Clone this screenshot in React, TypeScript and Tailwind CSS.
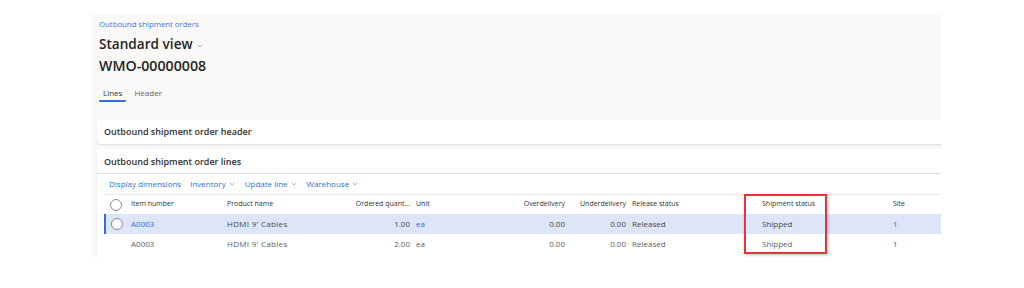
import { ChevronDown } from "lucide-react";

const font = { fontFamily: '"Open Sans", "Noto Sans", sans-serif' };

type Row = {
  item: string;
  product: string;
  qty: string;
  unit: string;
  over: string;
  under: string;
  release: string;
  shipment: string;
  site: string;
  selected?: boolean;
};

const rows: Row[] = [
  { item: "A0003", product: "HDMI 9' Cables", qty: "1.00", unit: "ea", over: "0.00", under: "0.00", release: "Released", shipment: "Shipped", site: "1", selected: true },
  { item: "A0003", product: "HDMI 9' Cables", qty: "2.00", unit: "ea", over: "0.00", under: "0.00", release: "Released", shipment: "Shipped", site: "1" },
];

function Radio() {
  return <span className="block w-[12px] h-[12px] rounded-full border border-[#8a8886] bg-white" />;
}

function ToolbarMenu({ label }: { label: string }) {
  return (
    <span className="flex items-center gap-[2px]">
      {label}
      <ChevronDown className="w-[8px] h-[8px]" strokeWidth={1.5} />
    </span>
  );
}

export default function App() {
  return (
    <div className="w-[1024px] h-[288px] bg-white pt-[14px] pl-[92px]" style={font}>
      <div className="w-[849px] h-[243px] bg-[#faf9f8] overflow-hidden">
        {/* page header */}
        <div className="pl-[7px] pt-[4px]">
          <div className="text-[7.8px] leading-[12px] text-[#3b76dd]">Outbound shipment orders</div>
          <div className="flex items-center gap-[3px] mt-[4px]">
            <span className="text-[13.6px] leading-[20px] font-semibold text-[#252423]">Standard view</span>
            <ChevronDown className="w-[8px] h-[8px] text-[#605e5c] mt-[3px]" strokeWidth={1.5} />
          </div>
          <div className="text-[14.2px] leading-[20px] font-semibold text-[#252423] mt-[2px]">WMO-00000008</div>
          <div className="flex gap-[4px] mt-[11px] text-[8px] leading-[12px] text-[#323130]">
            <div className="flex flex-col">
              <span className="px-[4px]">Lines</span>
              <span className="mt-[1px] h-[2px] rounded-full bg-[#2f6fdc]" />
            </div>
            <span className="px-[4px] text-[#605e5c]">Header</span>
          </div>
        </div>

        {/* cards */}
        <div className="pl-[5px] mt-[18px] flex flex-col gap-[5px]">
          <div className="w-[860px] h-[24px] bg-white rounded-[4px] shadow-[0_1px_2px_rgba(0,0,0,0.12)] flex items-center pl-[7px]">
            <span className="text-[9px] font-semibold text-[#323130]">Outbound shipment order header</span>
          </div>

          <div className="w-[860px] h-[120px] bg-white rounded-t-[4px] shadow-[0_1px_2px_rgba(0,0,0,0.12)]">
            <div className="h-[25px] flex items-center pl-[7px] pt-[1px] border-b border-[#e1dfdd]">
              <span className="text-[9px] font-semibold text-[#323130]">Outbound shipment order lines</span>
            </div>
            <div className="h-[20px] flex items-center gap-[9px] pl-[12px] text-[8px] text-[#2f6fdc]">
              <span>Display dimensions</span>
              <ToolbarMenu label="Inventory" />
              <ToolbarMenu label="Update line" />
              <ToolbarMenu label="Warehouse" />
            </div>

            {/* grid */}
            <div className="relative ml-[7px] border-t border-[#edebe9] text-[7px]">
              <div className="flex items-center h-[19px] text-[#323130]">
                <div className="w-[23px] flex justify-center pl-[1px]"><Radio /></div>
                <div className="w-[96px] pl-[4px]">Item number</div>
                <div className="w-[127px] pl-[4px]">Product name</div>
                <div className="w-[62px] pr-[2px] text-right">Ordered quant...</div>
                <div className="w-[58px] pl-[4px]">Unit</div>
                <div className="w-[97px] pr-[2px] text-right">Overdelivery</div>
                <div className="w-[61px] pr-[2px] text-right">Underdelivery</div>
                <div className="w-[130px] pl-[4px]">Release status</div>
                <div className="w-[131px] pl-[4px]">Shipment status</div>
                <div className="w-[60px] pl-[4px]">Site</div>
              </div>
              {rows.map((r, i) => (
                <div
                  key={i}
                  className={
                    r.selected
                      ? "flex items-center h-[20px] text-[8px] text-[#484644] bg-[#dce6f8] border-l-[2px] border-[#2f6fdc]"
                      : "flex items-center h-[20px] text-[8px] text-[#605e5c] border-l-[2px] border-transparent"
                  }
                >
                  <div className="w-[21px] flex justify-center">{r.selected && <Radio />}</div>
                  <div className={r.selected ? "w-[96px] pl-[4px] text-[#2f6fdc]" : "w-[96px] pl-[4px]"}>{r.item}</div>
                  <div className="w-[127px] pl-[4px] tracking-[0.3px]">{r.product}</div>
                  <div className="w-[62px] pr-[2px] text-right">{r.qty}</div>
                  <div className={r.selected ? "w-[58px] pl-[4px] text-[#2f6fdc]" : "w-[58px] pl-[4px]"}>{r.unit}</div>
                  <div className="w-[97px] pr-[2px] text-right">{r.over}</div>
                  <div className="w-[61px] pr-[2px] text-right">{r.under}</div>
                  <div className="w-[130px] pl-[4px]">{r.release}</div>
                  <div className="w-[131px] pl-[4px]">{r.shipment}</div>
                  <div className={r.selected ? "w-[60px] pl-[4px] text-[#2f6fdc]" : "w-[60px] pl-[4px]"}>{r.site}</div>
                </div>
              ))}
              {/* annotation box */}
              <div className="absolute left-[640px] top-[-1px] w-[83px] h-[60px] border-2 border-[#e5343a] shadow-[1px_1px_3px_rgba(0,0,0,0.25)]" />
            </div>
          </div>
        </div>
      </div>
    </div>
  );
}
